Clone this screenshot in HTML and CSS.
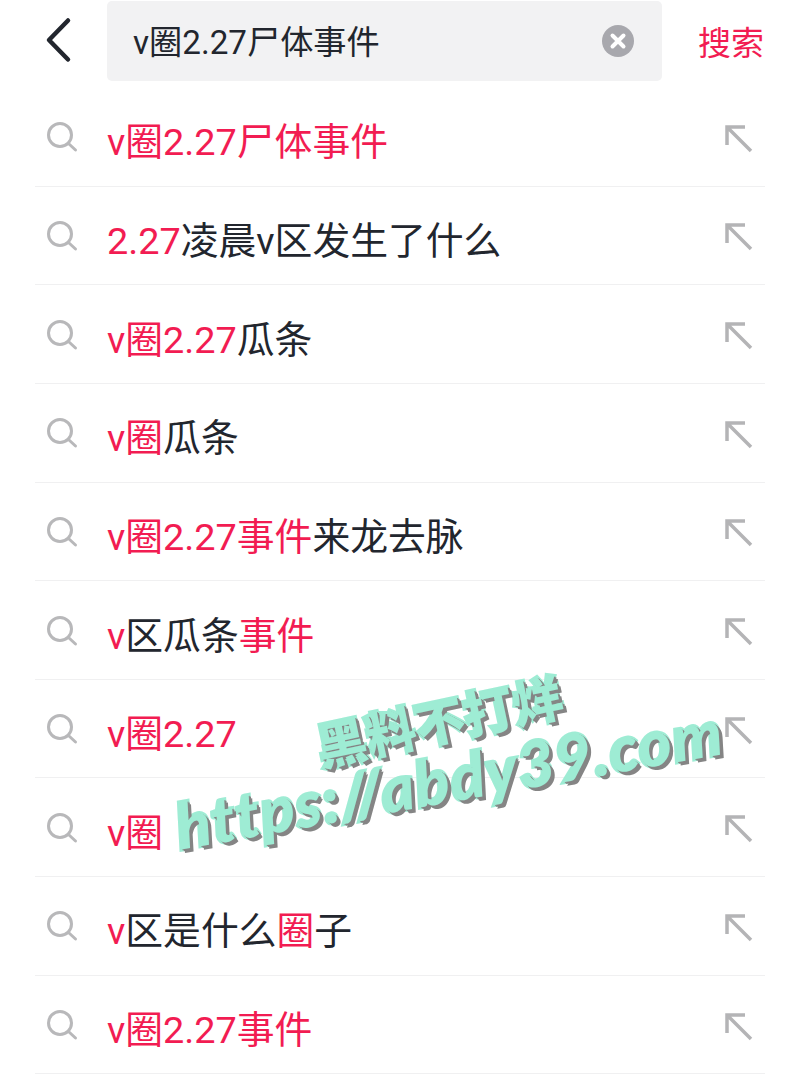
FILE: index.html
```html
<!DOCTYPE html>
<html lang="zh-CN">
<head>
    <meta charset="UTF-8">
    <meta name="viewport" content="width=device-width, initial-scale=1.0">
    <title>搜索</title>
    <link rel="stylesheet" href="styles.css">
</head>
<body>
    <div class="page">
        <header class="top">
            <svg class="back" width="30" height="48" viewBox="0 0 30 48"><path d="M24 3.500 L5 23 L24 42.500" /></svg>
            <div class="box">
                <span class="box-text">v圈2.27尸体事件</span>
                <svg class="clear" width="32" height="32" viewBox="0 0 32 32">
                    <circle cx="16" cy="16" r="16" />
                    <path d="M10.5 10.5 L21.5 21.5 M21.5 10.5 L10.5 21.5" />
                </svg>
            </div>
            <span class="go">搜索</span>
        </header>

        <ul class="list">
            <li class="row">
                <svg class="glass" width="34" height="34" viewBox="0 0 34 34"><circle cx="15" cy="15" r="11.5" /><path d="M24 24 L30.5 30" /></svg>
                <span class="txt"><em>v圈2.27尸体事件</em></span>
                <svg class="arrow" width="30" height="30" viewBox="0 0 30 30"><path d="M3 21 V3 H21 M3 3 L27 27" /></svg>
            </li>
            <li class="row">
                <svg class="glass" width="34" height="34" viewBox="0 0 34 34"><circle cx="15" cy="15" r="11.5" /><path d="M24 24 L30.5 30" /></svg>
                <span class="txt"><em>2.27</em>凌晨v区发生了什么</span>
                <svg class="arrow" width="30" height="30" viewBox="0 0 30 30"><path d="M3 21 V3 H21 M3 3 L27 27" /></svg>
            </li>
            <li class="row">
                <svg class="glass" width="34" height="34" viewBox="0 0 34 34"><circle cx="15" cy="15" r="11.5" /><path d="M24 24 L30.5 30" /></svg>
                <span class="txt"><em>v圈2.27</em>瓜条</span>
                <svg class="arrow" width="30" height="30" viewBox="0 0 30 30"><path d="M3 21 V3 H21 M3 3 L27 27" /></svg>
            </li>
            <li class="row">
                <svg class="glass" width="34" height="34" viewBox="0 0 34 34"><circle cx="15" cy="15" r="11.5" /><path d="M24 24 L30.5 30" /></svg>
                <span class="txt"><em>v圈</em>瓜条</span>
                <svg class="arrow" width="30" height="30" viewBox="0 0 30 30"><path d="M3 21 V3 H21 M3 3 L27 27" /></svg>
            </li>
            <li class="row">
                <svg class="glass" width="34" height="34" viewBox="0 0 34 34"><circle cx="15" cy="15" r="11.5" /><path d="M24 24 L30.5 30" /></svg>
                <span class="txt"><em>v圈2.27事件</em>来龙去脉</span>
                <svg class="arrow" width="30" height="30" viewBox="0 0 30 30"><path d="M3 21 V3 H21 M3 3 L27 27" /></svg>
            </li>
            <li class="row">
                <svg class="glass" width="34" height="34" viewBox="0 0 34 34"><circle cx="15" cy="15" r="11.5" /><path d="M24 24 L30.5 30" /></svg>
                <span class="txt"><em>v</em>区瓜条<em>事件</em></span>
                <svg class="arrow" width="30" height="30" viewBox="0 0 30 30"><path d="M3 21 V3 H21 M3 3 L27 27" /></svg>
            </li>
            <li class="row">
                <svg class="glass" width="34" height="34" viewBox="0 0 34 34"><circle cx="15" cy="15" r="11.5" /><path d="M24 24 L30.5 30" /></svg>
                <span class="txt"><em>v圈2.27</em></span>
                <svg class="arrow" width="30" height="30" viewBox="0 0 30 30"><path d="M3 21 V3 H21 M3 3 L27 27" /></svg>
            </li>
            <li class="row">
                <svg class="glass" width="34" height="34" viewBox="0 0 34 34"><circle cx="15" cy="15" r="11.5" /><path d="M24 24 L30.5 30" /></svg>
                <span class="txt"><em>v圈</em></span>
                <svg class="arrow" width="30" height="30" viewBox="0 0 30 30"><path d="M3 21 V3 H21 M3 3 L27 27" /></svg>
            </li>
            <li class="row">
                <svg class="glass" width="34" height="34" viewBox="0 0 34 34"><circle cx="15" cy="15" r="11.5" /><path d="M24 24 L30.5 30" /></svg>
                <span class="txt"><em>v</em>区是什么<em>圈</em>子</span>
                <svg class="arrow" width="30" height="30" viewBox="0 0 30 30"><path d="M3 21 V3 H21 M3 3 L27 27" /></svg>
            </li>
            <li class="row">
                <svg class="glass" width="34" height="34" viewBox="0 0 34 34"><circle cx="15" cy="15" r="11.5" /><path d="M24 24 L30.5 30" /></svg>
                <span class="txt"><em>v圈2.27事件</em></span>
                <svg class="arrow" width="30" height="30" viewBox="0 0 30 30"><path d="M3 21 V3 H21 M3 3 L27 27" /></svg>
            </li>
        </ul>

        <div class="mark mark-cn">黑料不打烊</div>
        <div class="mark mark-url">https://abdy39.com</div>
    </div>
</body>
</html>
```

FILE: styles.css
```css
body {
    margin: 0;
    background-color: #fff;
    color: #22262e;
    font-family: Roboto, "Noto Sans CJK SC", sans-serif;
}

.page {
    position: relative;
    width: 800px;
    height: 1080px;
    overflow: hidden;
}

.top {
    display: flex;
    align-items: center;
    height: 80px;
    padding-top: 1px;
    padding-left: 44px;
    padding-right: 36px;
}

.back {
    margin-right: 33px;
    fill: none;
    stroke: #22262e;
    stroke-width: 4.5;
    stroke-linecap: round;
    stroke-linejoin: round;
}

.box {
    display: flex;
    align-items: center;
    justify-content: space-between;
    width: 555px;
    height: 80px;
    padding: 0 28px 0 26px;
    box-sizing: border-box;
    background-color: #f2f2f3;
    border-radius: 5px;
}

.box-text {
    font-size: 33.2px;
    line-height: 80px;
    padding-top: 4px;
}

.clear {
    flex: none;
}

.clear circle {
    fill: #a8a8ad;
}

.clear path {
    fill: none;
    stroke: #fff;
    stroke-width: 4;
    stroke-linecap: round;
}

.go {
    margin-left: auto;
    color: #f21c52;
    font-size: 33px;
}

.list {
    list-style: none;
    margin: 7px 35px 0;
    padding: 0;
}

.row {
    display: flex;
    align-items: center;
    height: 98.65px;
    box-sizing: border-box;
    padding-left: 10px;
    padding-right: 11px;
    border-bottom: 1.5px solid #f0f0f1;
}

.glass {
    flex: none;
    margin-top: 1px;
    margin-right: 28px;
    fill: none;
    stroke: #b8b8ba;
    stroke-width: 3;
    stroke-linecap: round;
}

.txt {
    flex: 1;
    font-size: 37.8px;
    line-height: 50px;
    padding-top: 11px;
}

.txt em {
    font-style: normal;
    color: #f21c52;
}

.arrow {
    flex: none;
    margin-top: 4px;
    fill: none;
    stroke: #b4b4b6;
    stroke-width: 3.5;
}

/* watermark sits on top of the list */
.mark {
    position: absolute;
    color: #9eecd4;
    font-weight: 900;
    white-space: nowrap;
    -webkit-text-stroke: 4px #9eecd4;
    paint-order: stroke fill;
    text-shadow: 1px 1px 0 #858585, 2px 2px 0 #858585, 3px 4px 0 #858585;
}

.mark-cn {
    left: 314px;
    top: 684px;
    font-family: "Noto Sans CJK SC", sans-serif;
    font-size: 50px;
    line-height: 70px;
    transform: rotate(-12deg);
}

.mark-url {
    left: 172px;
    top: 738px;
    font-family: Lato, "Open Sans", sans-serif;
    font-style: italic;
    font-size: 63px;
    line-height: 80px;
    letter-spacing: 1.5px;
    transform: rotate(-10deg);
}
```
